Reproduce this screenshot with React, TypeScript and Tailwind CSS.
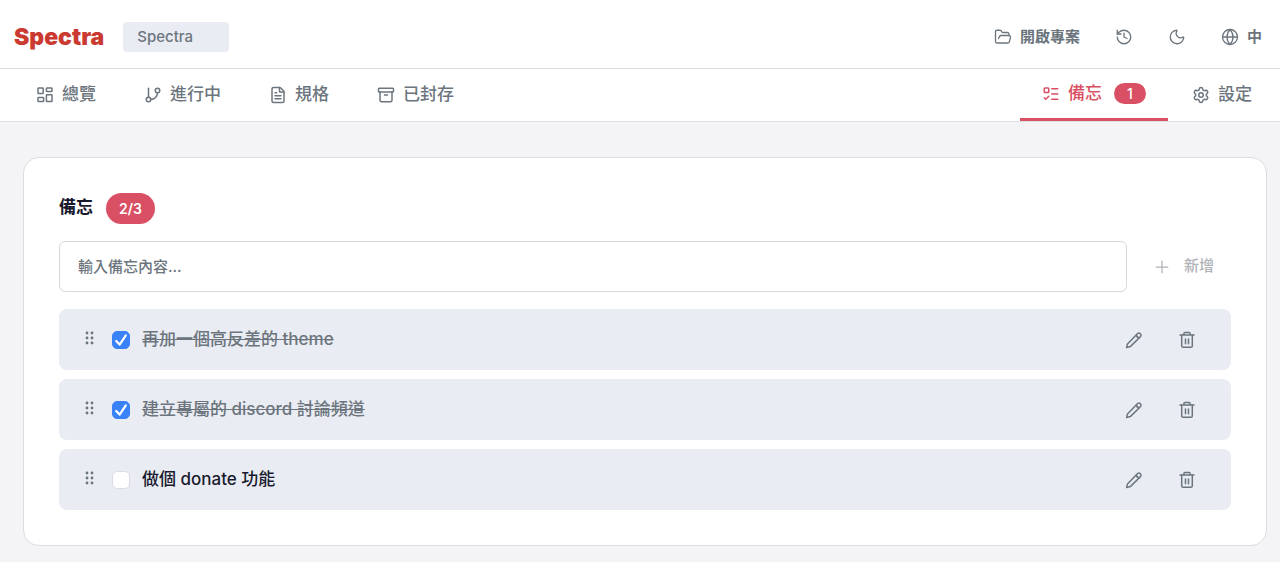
import { useState, type ReactNode } from "react";
import {
  Archive,
  FileText,
  FolderOpen,
  GitBranch,
  Globe,
  History,
  ListTodo,
  Moon,
  Plus,
  Settings,
} from "lucide-react";

type Memo = { id: number; text: string; done: boolean };

const initialMemos: Memo[] = [
  { id: 1, text: "再加一個高反差的 theme", done: true },
  { id: 2, text: "建立專屬的 discord 討論頻道", done: true },
  { id: 3, text: "做個 donate 功能", done: false },
];

function Glyph({ children }: { children: ReactNode }) {
  return (
    <svg
      viewBox="0 0 18 18"
      className="size-[18px] shrink-0"
      fill="none"
      stroke="currentColor"
      strokeWidth="1.5"
      strokeLinecap="round"
      strokeLinejoin="round"
      aria-hidden="true"
    >
      {children}
    </svg>
  );
}

function OverviewIcon() {
  return (
    <Glyph>
      <rect x="2" y="2" width="5.2" height="5.6" rx="0.6" />
      <rect x="10.4" y="2" width="5.6" height="3.6" rx="0.6" />
      <rect x="2" y="11.4" width="5.6" height="4.2" rx="0.6" />
      <rect x="10.4" y="8.8" width="5.6" height="6.8" rx="0.6" />
    </Glyph>
  );
}

function PencilIcon() {
  return (
    <Glyph>
      <path d="M1.6 16.4 2.5 12.9 12.6 2.5a2.15 2.15 0 0 1 3 3L5.3 15.6Z" />
      <path d="M11.4 3.9a3.1 3.1 0 0 0 2.9 2.9" />
    </Glyph>
  );
}

function TrashIcon() {
  return (
    <Glyph>
      <path d="M2 4h14M5.9 3.8V2.4a1 1 0 0 1 1-1h4.2a1 1 0 0 1 1 1v1.4" />
      <path d="M3.7 4.2v10.7a1.4 1.4 0 0 0 1.4 1.4h7.8a1.4 1.4 0 0 0 1.4-1.4V4.2" />
      <path d="M7.5 8v4.7M10.5 8v4.7" />
    </Glyph>
  );
}

function GripIcon() {
  return (
    <svg viewBox="0 0 18 18" className="mb-1 size-[18px] shrink-0" fill="currentColor" aria-hidden="true">
      {[4, 9, 14].map((y) => (
        <g key={y}>
          <circle cx="7" cy={y} r="1.4" />
          <circle cx="12" cy={y} r="1.4" />
        </g>
      ))}
    </svg>
  );
}

function Tab({ icon, label }: { icon: ReactNode; label: string }) {
  return (
    <a href="#" className="flex items-center gap-2 px-6 text-[#6c757d]">
      {icon}
      {label}
    </a>
  );
}

export default function App() {
  const [memos, setMemos] = useState(initialMemos);
  const [draft, setDraft] = useState("");

  const toggle = (id: number) =>
    setMemos(memos.map((m) => (m.id === id ? { ...m, done: !m.done } : m)));
  const remove = (id: number) => setMemos(memos.filter((m) => m.id !== id));
  const add = () => {
    if (!draft.trim()) return;
    setMemos([...memos, { id: Date.now(), text: draft, done: false }]);
    setDraft("");
  };
  const done = memos.filter((m) => m.done).length;

  return (
    <div className="min-h-screen bg-[#f4f4f7] pb-4 font-['Inter','Noto_Sans_CJK_TC',sans-serif] text-[#1a1a2e]">
      <header className="flex h-[69px] items-center justify-between border-b border-[#d9dadd] bg-white pt-[6px] pr-[18px] pl-[14px] text-[#6c757d]">
        <div className="flex items-center gap-[19px]">
          <h1 className="text-[23px] leading-8 font-black text-[#cb3a31]">Spectra</h1>
          <button className="h-[30px] w-[106px] rounded bg-[#e9ecf3] px-[14px] text-left text-[15px] font-medium">
            Spectra
          </button>
        </div>
        <div className="flex items-center gap-[35px] text-[15px] font-bold">
          <button className="flex items-center gap-2">
            <FolderOpen size={18} strokeWidth={1.75} />
            開啟專案
          </button>
          <button aria-label="歷史">
            <History size={18} strokeWidth={1.75} />
          </button>
          <button aria-label="主題">
            <Moon size={18} strokeWidth={1.75} />
          </button>
          <button className="flex items-center gap-2">
            <Globe size={18} strokeWidth={1.75} />中
          </button>
        </div>
      </header>

      <nav className="flex h-[53px] justify-between border-b border-[#dedfe3] bg-white pr-1 pl-3 text-[17px] font-medium">
        <div className="flex">
          <Tab icon={<OverviewIcon />} label="總覽" />
          <Tab icon={<GitBranch size={18} strokeWidth={2} />} label="進行中" />
          <Tab icon={<FileText size={18} strokeWidth={2} />} label="規格" />
          <Tab icon={<Archive size={18} strokeWidth={2} />} label="已封存" />
        </div>
        <div className="flex">
          <a
            href="#"
            className="flex items-center gap-2 border-b-3 border-[#d94f63] px-[22px] text-[#d94f63]"
          >
            <ListTodo size={18} strokeWidth={2} />
            備忘
            <span className="ml-1 flex h-[21px] w-8 items-center justify-center rounded-full bg-[#d94f63] text-sm text-white">
              1
            </span>
          </a>
          <Tab icon={<Settings size={18} strokeWidth={2} />} label="設定" />
        </div>
      </nav>

      <main className="mt-[35px] mr-[13px] ml-[23px] rounded-2xl border border-[#dcdde1] bg-white p-[35px]">
        <div className="flex items-start gap-[13px]">
          <h2 className="text-[17px] leading-7 font-bold">備忘</h2>
          <span className="flex h-[31px] w-[49px] items-center justify-center rounded-full bg-[#d94f63] text-sm font-semibold text-white">
            {done}/{memos.length}
          </span>
        </div>
        <div className="mt-[17px] flex">
          <input
            aria-label="輸入備忘內容"
            value={draft}
            onChange={(e) => setDraft(e.target.value)}
            placeholder="輸入備忘內容..."
            className="h-[51px] min-w-0 flex-1 rounded-md border border-[#d6d8dc] px-[18px] text-[15px] font-medium outline-none placeholder:text-[#6c757d]"
          />
          <button
            onClick={add}
            className="flex w-[104px] items-center gap-3 pl-[25px] text-[15px] font-medium text-[#afb2b7]"
          >
            <Plus size={20} strokeWidth={1.5} />
            新增
          </button>
        </div>
        <ul className="mt-[17px] flex flex-col gap-[9px]">
          {memos.map((m) => (
            <li
              key={m.id}
              className="flex h-[61px] items-center justify-between rounded-lg bg-[#e9ecf3] pr-[35px] pl-[21px]"
            >
              <div className="flex items-center text-[#6c757d]">
                <GripIcon />
                <label className="ml-[14px] flex items-center gap-3 text-[17px] font-medium">
                  <input
                    type="checkbox"
                    checked={m.done}
                    onChange={() => toggle(m.id)}
                    className="peer sr-only"
                  />
                  <span
                    aria-hidden="true"
                    className="flex size-[18px] items-center justify-center rounded-[5px] border border-[#dadde4] bg-white text-white peer-checked:border-[#3a82f8] peer-checked:bg-[#3a82f8]"
                  >
                    <svg viewBox="0 0 18 18" className="size-[18px] shrink-0">
                      <path
                        d="M4.2 10 7.6 13.6 13.8 4.4"
                        fill="none"
                        stroke="currentColor"
                        strokeWidth="2.2"
                        strokeLinecap="round"
                        strokeLinejoin="round"
                      />
                    </svg>
                  </span>
                  <span className={m.done ? "line-through" : "text-[#1a1a2e]"}>{m.text}</span>
                </label>
              </div>
              <div className="flex items-center gap-[35px] text-[#6c757d]">
                <button aria-label="編輯">
                  <PencilIcon />
                </button>
                <button aria-label="刪除" onClick={() => remove(m.id)}>
                  <TrashIcon />
                </button>
              </div>
            </li>
          ))}
        </ul>
      </main>
    </div>
  );
}
